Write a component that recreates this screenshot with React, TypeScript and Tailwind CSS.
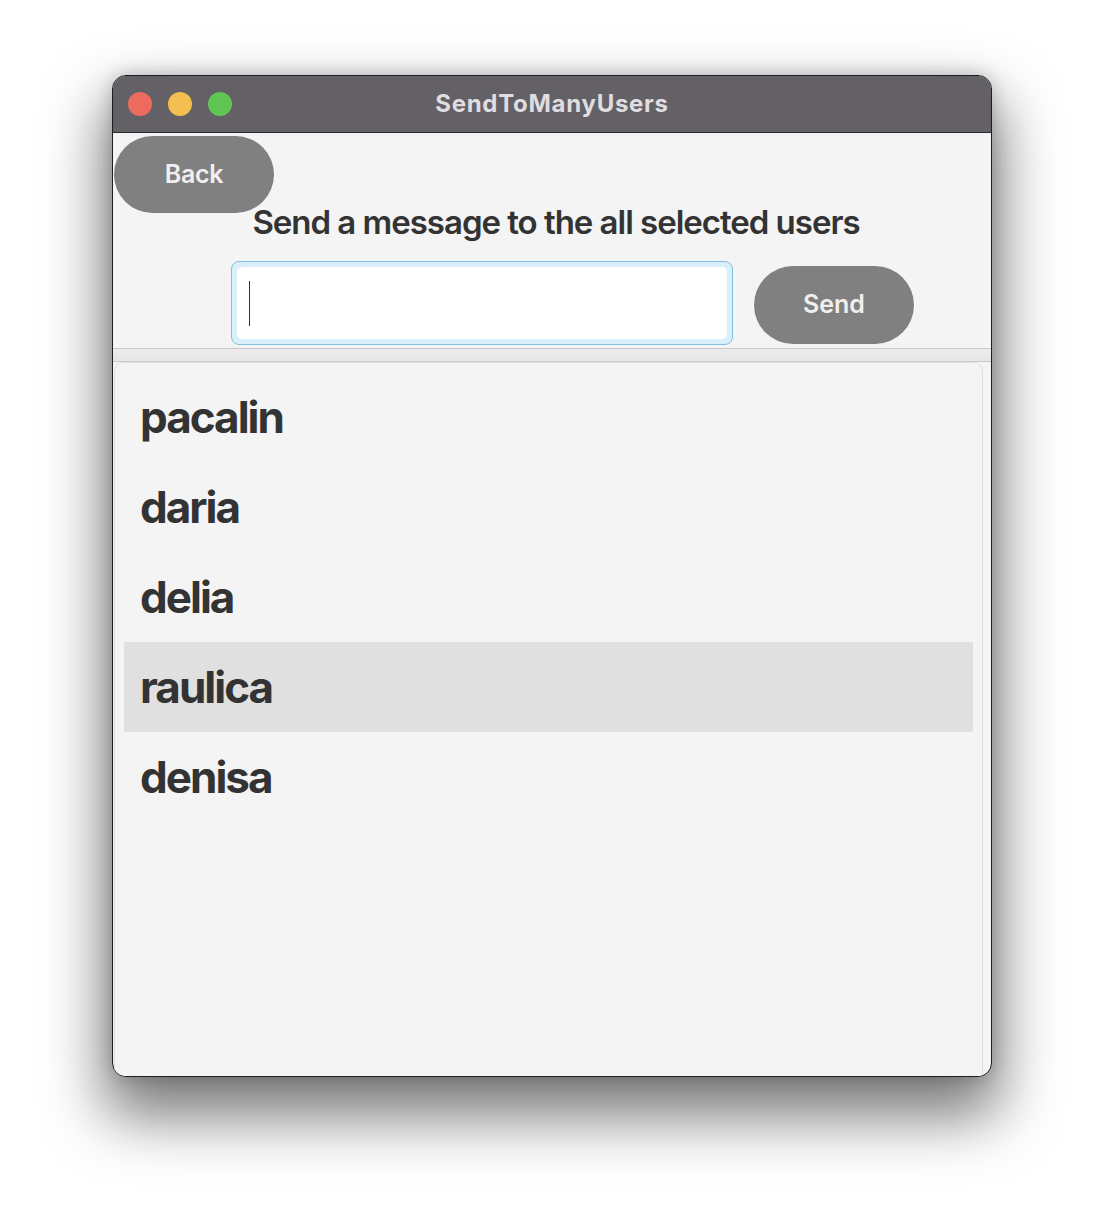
const users = ['pacalin', 'daria', 'delia', 'raulica', 'denisa']

export default function App() {
  const selected = 'raulica'

  return (
    <div className="min-h-[1224px] bg-white pt-[75px] pl-[112px] font-['Inter',sans-serif]">
      <div className="flex h-[1002px] w-[880px] flex-col overflow-hidden rounded-[14px] border border-[#1e1e1e] bg-[#f4f4f4] shadow-[0_32px_60px_8px_rgba(0,0,0,0.52),0_0_18px_rgba(0,0,0,0.2)]">
        {/* title bar */}
        <div className="relative flex h-[57px] shrink-0 items-center border-b border-[#2a2a2a] bg-[#636166]">
          <div className="flex items-center gap-4 pl-[15px]">
            <span className="size-6 rounded-full bg-[#ed6a5e]" />
            <span className="size-6 rounded-full bg-[#f4bf4f]" />
            <span className="size-6 rounded-full bg-[#61c554]" />
          </div>
          <div className="absolute inset-0 flex items-center justify-center text-[24px] font-bold tracking-[0.03em] text-[#dfdde0]">
            SendToManyUsers
          </div>
        </div>

        {/* top area */}
        <div className="flex shrink-0 flex-col">
          <button className="mt-[3px] ml-px flex h-[77px] w-[160px] items-center justify-center rounded-full bg-[#808080] text-[25px] font-semibold tracking-[-0.01em] text-[#f2eeee]">
            Back
          </button>
          <div className="relative -mt-[11px] pl-[8px] text-center text-[33px] leading-[40px] font-semibold tracking-[-0.031em] text-[#333333]">
            Send a message to the all selected users
          </div>
          <div className="mt-[19px] flex items-start pl-[118px]">
            <div className="h-[84px] w-[502px] rounded-[8px] border border-[#7fc2de] bg-[#d9eff9] p-[5px]">
              <div className="flex h-full items-center rounded-[5px] bg-white pl-[12px]">
                <span className="h-[45px] w-px bg-[#333]" />
              </div>
            </div>
            <button className="mt-[5px] ml-[21px] flex h-[78px] w-[160px] items-center justify-center rounded-full bg-[#808080] text-[25px] font-semibold text-[#f2eeee]">
              Send
            </button>
          </div>
          <div className="mt-[3px] h-[14px] border-y border-[#c8c8c8] bg-gradient-to-b from-[#ececec] to-[#e6e6e6]" />
        </div>

        {/* list */}
        <div className="ml-px mr-[8px] flex-1 rounded-t-[9px] border-x border-t border-[#dedede] bg-[#f4f4f4] px-[9px] pt-[9px]">
          {users.map((u) => (
            <div
              key={u}
              className={
                'flex h-[90px] items-center pl-[16px] text-[44px] font-bold tracking-[-0.045em] text-[#333333] ' +
                (u === selected ? 'bg-[#e0e0e0]' : '')
              }
            >
              {u}
            </div>
          ))}
        </div>
      </div>
    </div>
  )
}
